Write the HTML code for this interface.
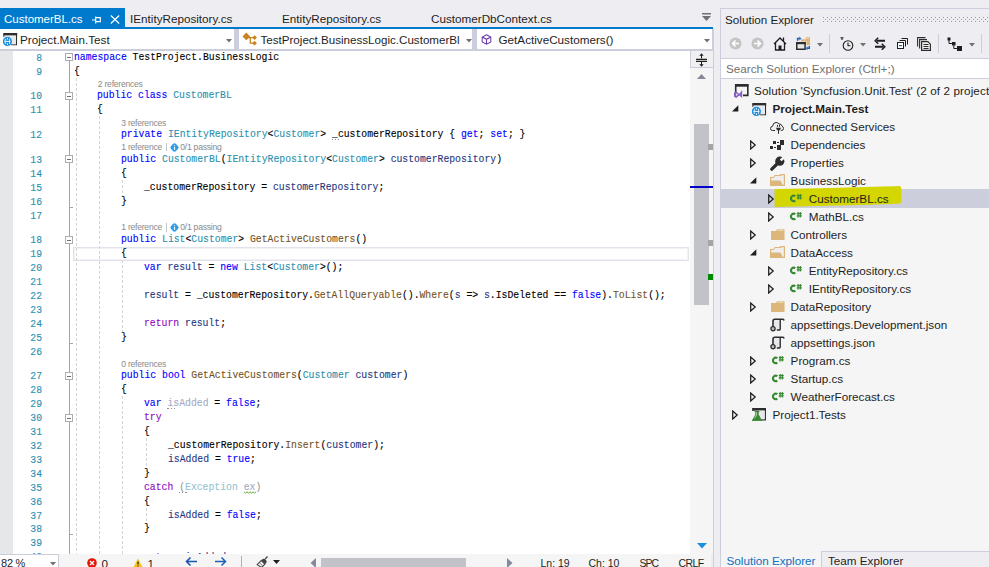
<!DOCTYPE html>
<html><head><meta charset="utf-8">
<style>
*{margin:0;padding:0;box-sizing:border-box}
html,body{width:989px;height:567px;overflow:hidden;background:#EEEEF2;font-family:"Liberation Sans",sans-serif;}
.a{position:absolute}
.code{position:absolute;font-family:"Liberation Mono",monospace;font-size:11px;line-height:14px;height:14px;white-space:pre;transform:scaleX(0.8879);transform-origin:0 0;-webkit-text-stroke:0.12px}
.ln{position:absolute;font-family:"Liberation Mono",monospace;font-size:11px;line-height:14px;height:14px;color:#2B91AF;text-align:right;width:40px;left:1.7px;white-space:pre;transform:scaleX(0.8879);transform-origin:100% 0;-webkit-text-stroke:0.15px}
.cl{position:absolute;font-size:8.6px;letter-spacing:-0.25px;line-height:11px;color:#8A8A8A;white-space:pre}
.ui{position:absolute;font-size:11.7px;line-height:16px;white-space:pre;color:#1E1E1E}
.tree{position:absolute;font-size:11.7px;line-height:18px;height:18px;white-space:pre;color:#1E1E1E}
</style></head><body>

<div class="a" style="left:0;top:8px;width:125px;height:20px;background:#007ACC"></div>
<div class="ui" style="left:4px;top:10.7px;color:#fff;font-size:11.5px">CustomerBL.cs</div>
<svg class="a" style="left:92px;top:16px" width="9" height="8" viewBox="0 0 9 8"><path d="M0 4H3.5M3.7 0.5V7.5M3.7 1.6H8.3V5.6H3.7" stroke="#fff" stroke-width="1.1" fill="none"/></svg>
<svg class="a" style="left:110px;top:14.5px" width="10" height="9" viewBox="0 0 10 9"><path d="M0.8 0.5L9.2 8.5M9.2 0.5L0.8 8.5" stroke="#fff" stroke-width="1.2"/></svg>
<div class="ui" style="left:130px;top:10.7px">IEntityRepository.cs</div>
<div class="ui" style="left:282px;top:10.7px">EntityRepository.cs</div>
<div class="ui" style="left:431px;top:10.7px">CustomerDbContext.cs</div>
<svg class="a" style="left:701px;top:12px" width="11" height="10" viewBox="0 0 11 10"><rect x="1" y="1" width="9" height="1.5" fill="#717171"/><path d="M1 4H10L5.5 9Z" fill="#717171"/></svg>
<div class="a" style="left:0;top:27px;width:713px;height:2px;background:#007ACC"></div>
<div class="a" style="left:0;top:29px;width:713px;height:20px;background:#fff"></div>
<div class="a" style="left:234px;top:29px;width:4.6px;height:20px;background:#CCCEDB"></div>
<div class="a" style="left:472px;top:29px;width:5px;height:20px;background:#CCCEDB"></div>
<div class="a" style="left:712px;top:29px;width:1px;height:22px;background:#CCCEDB"></div>
<div class="a" style="left:0;top:49px;width:713px;height:2px;background:#CCCEDB"></div>
<svg class="a" style="left:2.5px;top:32.5px" width="15" height="13" viewBox="0 0 15 13"><path d="M1 4V1H13.5V11.8H8" stroke="#2D2D2D" stroke-width="1.1" fill="none"/><rect x="0.4" y="0" width="13.8" height="2.6" fill="#2D2D2D"/><rect x="1.5" y="2.6" width="11.4" height="8.6" fill="#E8E8EC"/><circle cx="4.4" cy="8.4" r="4.6" fill="#1E8DDD"/><path d="M1.6 8.4H7.2M4.4 4.8V6.6M4.4 10.2V12" stroke="#fff" stroke-width="0.9"/><path d="M2.5 5.8Q1.3 8.4 2.5 11M6.3 5.8Q7.5 8.4 6.3 11" stroke="#fff" stroke-width="0.8" fill="none"/></svg>
<div class="ui" style="left:20px;top:32px">Project.Main.Test</div>
<svg class="a" style="left:226px;top:39px" width="6" height="4" viewBox="0 0 6 4"><path d="M0 0H6L3 3.5Z" fill="#717171"/></svg>
<svg class="a" style="left:241.5px;top:31.5px" width="15" height="16" viewBox="0 0 15 16"><path d="M4.3 0.6L8.1 4.4L4.3 8.2L0.5 4.4Z" fill="#C8841E"/><path d="M6 5.6H12M8.3 5.6V11.2H12" stroke="#C8841E" stroke-width="1.3" fill="none"/><path d="M12.6 3.2L14.9 5.6L12.6 8L10.3 5.6Z M12.6 8.8L14.9 11.2L12.6 13.6L10.3 11.2Z" fill="#C8841E"/></svg>
<div class="ui" style="left:260.5px;top:32px;font-size:11.6px">TestProject.BusinessLogic.CustomerBl</div>
<svg class="a" style="left:465.5px;top:39px" width="6" height="4" viewBox="0 0 6 4"><path d="M0 0H6L3 3.5Z" fill="#717171"/></svg>
<svg class="a" style="left:480.5px;top:34px" width="11" height="11" viewBox="0 0 11 12"><path d="M5.5 0.8L10.2 3.3V8.7L5.5 11.2L0.8 8.7V3.3Z M0.8 3.3L5.5 5.8L10.2 3.3 M5.5 5.8V11.2" stroke="#6936AA" stroke-width="1.1" fill="none"/></svg>
<div class="ui" style="left:498.5px;top:32px">GetActiveCustomers()</div>
<svg class="a" style="left:704px;top:39px" width="6" height="4" viewBox="0 0 6 4"><path d="M0 0H6L3 3.5Z" fill="#717171"/></svg>
<div class="a" style="left:0;top:51px;width:711px;height:503px;background:#fff;overflow:hidden">
<div class="a" style="left:0;top:0;width:13px;height:503px;background:#E6E7E8"></div>
</div>
<div class="a" style="left:0;top:51px;width:690px;height:503px;overflow:hidden">
<div class="a" style="left:73px;top:196.08px;width:616px;height:14px;border:1px solid #E2E2EA;box-shadow:inset 0 0 0 1px #F2F2F6"></div>
<div class="a" style="left:76.00px;top:26.58px;width:1px;height:487.62px;background:repeating-linear-gradient(to bottom,#D4D4D4 0 3px,transparent 3px 5px)"></div>
<div class="a" style="left:99.00px;top:65.30px;width:1px;height:448.90px;background:repeating-linear-gradient(to bottom,#D4D4D4 0 3px,transparent 3px 5px)"></div>
<div class="a" style="left:122.00px;top:128.83px;width:1px;height:15.82px;background:repeating-linear-gradient(to bottom,#D4D4D4 0 3px,transparent 3px 5px)"></div>
<div class="a" style="left:122.00px;top:209.28px;width:1px;height:71.46px;background:repeating-linear-gradient(to bottom,#D4D4D4 0 3px,transparent 3px 5px)"></div>
<div class="a" style="left:122.00px;top:345.37px;width:1px;height:168.83px;background:repeating-linear-gradient(to bottom,#D4D4D4 0 3px,transparent 3px 5px)"></div>
<div class="a" style="left:146.00px;top:387.10px;width:1px;height:29.73px;background:repeating-linear-gradient(to bottom,#D4D4D4 0 3px,transparent 3px 5px)"></div>
<div class="a" style="left:146.00px;top:456.65px;width:1px;height:15.82px;background:repeating-linear-gradient(to bottom,#D4D4D4 0 3px,transparent 3px 5px)"></div>
<div class="a" style="left:69px;top:10.00px;width:1px;height:31.00px;background:#A5A5A5"></div>
<div class="a" style="left:69px;top:49.00px;width:1px;height:55.00px;background:#A5A5A5"></div>
<div class="a" style="left:69px;top:112.00px;width:1px;height:73.00px;background:#A5A5A5"></div>
<div class="a" style="left:69px;top:193.00px;width:1px;height:128.00px;background:#A5A5A5"></div>
<div class="a" style="left:69px;top:329.00px;width:1px;height:34.00px;background:#A5A5A5"></div>
<div class="a" style="left:69px;top:371.00px;width:1px;height:149.00px;background:#A5A5A5"></div>
<div class="a" style="left:65px;top:2.00px;width:8px;height:8px;border:1px solid #ADADAD;background:#fff"></div>
<div class="a" style="left:67px;top:6.00px;width:4px;height:1px;background:#717171"></div>
<div class="a" style="left:65px;top:41.00px;width:8px;height:8px;border:1px solid #ADADAD;background:#fff"></div>
<div class="a" style="left:67px;top:45.00px;width:4px;height:1px;background:#717171"></div>
<div class="a" style="left:65px;top:104.00px;width:8px;height:8px;border:1px solid #ADADAD;background:#fff"></div>
<div class="a" style="left:67px;top:108.00px;width:4px;height:1px;background:#717171"></div>
<div class="a" style="left:65px;top:185.00px;width:8px;height:8px;border:1px solid #ADADAD;background:#fff"></div>
<div class="a" style="left:67px;top:189.00px;width:4px;height:1px;background:#717171"></div>
<div class="a" style="left:65px;top:321.00px;width:8px;height:8px;border:1px solid #ADADAD;background:#fff"></div>
<div class="a" style="left:67px;top:325.00px;width:4px;height:1px;background:#717171"></div>
<div class="a" style="left:65px;top:363.00px;width:8px;height:8px;border:1px solid #ADADAD;background:#fff"></div>
<div class="a" style="left:67px;top:367.00px;width:4px;height:1px;background:#717171"></div>
<div class="a" style="left:69px;top:156.00px;width:4px;height:1px;background:#A5A5A5"></div>
<div class="a" style="left:69px;top:292.00px;width:4px;height:1px;background:#A5A5A5"></div>
<div class="a" style="left:69px;top:483.00px;width:4px;height:1px;background:#A5A5A5"></div>
<div class="ln" style="top:-0.33px">8</div>
<div class="code" style="left:73.90px;top:-1.33px"><span style="color:#0000FF">namespace</span><span style="color:#000000"> TestProject.BusinessLogic</span></div>
<div class="ln" style="top:13.58px">9</div>
<div class="code" style="left:73.90px;top:12.58px"><span style="color:#000000">{</span></div>
<div class="ln" style="top:38.39px">10</div>
<div class="code" style="left:97.34px;top:37.39px"><span style="color:#0000FF">public</span><span style="color:#000000"> </span><span style="color:#0000FF">class</span><span style="color:#000000"> </span><span style="color:#2B91AF">CustomerBL</span></div>
<div class="cl" style="left:97.84px;top:27.82px">2 references</div>
<div class="ln" style="top:52.30px">11</div>
<div class="code" style="left:97.34px;top:51.30px"><span style="color:#000000">{</span></div>
<div class="ln" style="top:77.11px">12</div>
<div class="code" style="left:120.78px;top:76.11px"><span style="color:#0000FF">private</span><span style="color:#000000"> </span><span style="color:#2B91AF">IEntityRepository</span><span style="color:#000000">&lt;</span><span style="color:#2B91AF">Customer</span><span style="color:#000000">&gt; _customerRepository { </span><span style="color:#0000FF">get</span><span style="color:#000000">; </span><span style="color:#0000FF">set</span><span style="color:#000000">; }</span></div>
<div class="cl" style="left:121.28px;top:66.54px">3 references</div>
<div class="ln" style="top:101.92px">13</div>
<div class="code" style="left:120.78px;top:100.92px"><span style="color:#0000FF">public</span><span style="color:#000000"> </span><span style="color:#2B91AF">CustomerBL</span><span style="color:#000000">(</span><span style="color:#2B91AF">IEntityRepository</span><span style="color:#000000">&lt;</span><span style="color:#2B91AF">Customer</span><span style="color:#000000">&gt; </span><span style="color:#1F377F">customerRepository</span><span style="color:#000000">)</span></div>
<div class="cl" style="left:121.28px;top:90.75px">1 reference</div>
<div class="a" style="left:165.78px;top:91.95px;width:1px;height:8.5px;background:#C4C4C4"></div>
<svg class="a" style="left:169.58px;top:91.95px" width="9" height="9" viewBox="0 0 9 9"><path d="M4.5 0.3Q5.2 0.3 6.5 1.6L7.4 2.5Q8.7 3.8 8.7 4.5Q8.7 5.2 7.4 6.5L6.5 7.4Q5.2 8.7 4.5 8.7Q3.8 8.7 2.5 7.4L1.6 6.5Q0.3 5.2 0.3 4.5Q0.3 3.8 1.6 2.5L2.5 1.6Q3.8 0.3 4.5 0.3Z" fill="#2D9BE5"/><path d="M4.5 2.2V2.9M4.5 3.8V6.8" stroke="#fff" stroke-width="1.2"/></svg>
<div class="cl" style="left:180.28px;top:90.75px">0/1 passing</div>
<div class="ln" style="top:115.83px">14</div>
<div class="code" style="left:120.78px;top:114.83px"><span style="color:#000000">{</span></div>
<div class="ln" style="top:129.74px">15</div>
<div class="code" style="left:144.22px;top:128.74px"><span style="color:#000000">_customerRepository = </span><span style="color:#1F377F">customerRepository</span><span style="color:#000000">;</span></div>
<div class="ln" style="top:143.65px">16</div>
<div class="code" style="left:120.78px;top:142.65px"><span style="color:#000000">}</span></div>
<div class="ln" style="top:157.56px">17</div>
<div class="ln" style="top:182.37px">18</div>
<div class="code" style="left:120.78px;top:181.37px"><span style="color:#0000FF">public</span><span style="color:#000000"> </span><span style="color:#2B91AF">List</span><span style="color:#000000">&lt;</span><span style="color:#2B91AF">Customer</span><span style="color:#000000">&gt; </span><span style="color:#74531F">GetActiveCustomers</span><span style="color:#000000">()</span></div>
<div class="cl" style="left:121.28px;top:171.20px">1 reference</div>
<div class="a" style="left:165.78px;top:172.40px;width:1px;height:8.5px;background:#C4C4C4"></div>
<svg class="a" style="left:169.58px;top:172.40px" width="9" height="9" viewBox="0 0 9 9"><path d="M4.5 0.3Q5.2 0.3 6.5 1.6L7.4 2.5Q8.7 3.8 8.7 4.5Q8.7 5.2 7.4 6.5L6.5 7.4Q5.2 8.7 4.5 8.7Q3.8 8.7 2.5 7.4L1.6 6.5Q0.3 5.2 0.3 4.5Q0.3 3.8 1.6 2.5L2.5 1.6Q3.8 0.3 4.5 0.3Z" fill="#2D9BE5"/><path d="M4.5 2.2V2.9M4.5 3.8V6.8" stroke="#fff" stroke-width="1.2"/></svg>
<div class="cl" style="left:180.28px;top:171.20px">0/1 passing</div>
<div class="ln" style="top:196.28px">19</div>
<div class="code" style="left:120.78px;top:195.28px"><span style="color:#000000">{</span></div>
<div class="ln" style="top:210.19px">20</div>
<div class="code" style="left:144.22px;top:209.19px"><span style="color:#0000FF">var</span><span style="color:#000000"> </span><span style="color:#1F377F">result</span><span style="color:#000000"> = </span><span style="color:#0000FF">new</span><span style="color:#000000"> </span><span style="color:#2B91AF">List</span><span style="color:#000000">&lt;</span><span style="color:#2B91AF">Customer</span><span style="color:#000000">&gt;();</span></div>
<div class="ln" style="top:224.10px">21</div>
<div class="ln" style="top:238.01px">22</div>
<div class="code" style="left:144.22px;top:237.01px"><span style="color:#1F377F">result</span><span style="color:#000000"> = _customerRepository.</span><span style="color:#74531F">GetAllQueryable</span><span style="color:#000000">().</span><span style="color:#74531F">Where</span><span style="color:#000000">(</span><span style="color:#1F377F">s</span><span style="color:#000000"> =&gt; </span><span style="color:#1F377F">s</span><span style="color:#000000">.IsDeleted == </span><span style="color:#0000FF">false</span><span style="color:#000000">).</span><span style="color:#74531F">ToList</span><span style="color:#000000">();</span></div>
<div class="ln" style="top:251.92px">23</div>
<div class="ln" style="top:265.83px">24</div>
<div class="code" style="left:144.22px;top:264.83px"><span style="color:#8F08C4">return</span><span style="color:#000000"> </span><span style="color:#1F377F">result</span><span style="color:#000000">;</span></div>
<div class="ln" style="top:279.74px">25</div>
<div class="code" style="left:120.78px;top:278.74px"><span style="color:#000000">}</span></div>
<div class="ln" style="top:293.65px">26</div>
<div class="ln" style="top:318.46px">27</div>
<div class="code" style="left:120.78px;top:317.46px"><span style="color:#0000FF">public</span><span style="color:#000000"> </span><span style="color:#0000FF">bool</span><span style="color:#000000"> </span><span style="color:#74531F">GetActiveCustomers</span><span style="color:#000000">(</span><span style="color:#2B91AF">Customer</span><span style="color:#000000"> </span><span style="color:#1F377F">customer</span><span style="color:#000000">)</span></div>
<div class="cl" style="left:121.28px;top:307.89px">0 references</div>
<div class="ln" style="top:332.37px">28</div>
<div class="code" style="left:120.78px;top:331.37px"><span style="color:#000000">{</span></div>
<div class="ln" style="top:346.28px">29</div>
<div class="code" style="left:144.22px;top:345.28px"><span style="color:#0000FF">var</span><span style="color:#000000"> </span><span style="color:#A3ABC6">isAdded</span><span style="color:#000000"> = </span><span style="color:#0000FF">false</span><span style="color:#000000">;</span></div>
<div class="ln" style="top:360.19px">30</div>
<div class="code" style="left:144.22px;top:359.19px"><span style="color:#8F08C4">try</span></div>
<div class="ln" style="top:374.10px">31</div>
<div class="code" style="left:144.22px;top:373.10px"><span style="color:#000000">{</span></div>
<div class="ln" style="top:388.01px">32</div>
<div class="code" style="left:167.66px;top:387.01px"><span style="color:#000000">_customerRepository.</span><span style="color:#74531F">Insert</span><span style="color:#000000">(</span><span style="color:#1F377F">customer</span><span style="color:#000000">);</span></div>
<div class="ln" style="top:401.92px">33</div>
<div class="code" style="left:167.66px;top:400.92px"><span style="color:#1F377F">isAdded</span><span style="color:#000000"> = </span><span style="color:#0000FF">true</span><span style="color:#000000">;</span></div>
<div class="ln" style="top:415.83px">34</div>
<div class="code" style="left:144.22px;top:414.83px"><span style="color:#000000">}</span></div>
<div class="ln" style="top:429.74px">35</div>
<div class="code" style="left:144.22px;top:428.74px"><span style="color:#8F08C4">catch</span><span style="color:#9A9A9A"> (</span><span style="color:#95C3D3">Exception</span><span style="color:#9A9A9A"> </span><span style="color:#A3ABC6">ex</span><span style="color:#9A9A9A">)</span></div>
<div class="ln" style="top:443.65px">36</div>
<div class="code" style="left:144.22px;top:442.65px"><span style="color:#000000">{</span></div>
<div class="ln" style="top:457.56px">37</div>
<div class="code" style="left:167.66px;top:456.56px"><span style="color:#1F377F">isAdded</span><span style="color:#000000"> = </span><span style="color:#0000FF">false</span><span style="color:#000000">;</span></div>
<div class="ln" style="top:471.47px">38</div>
<div class="code" style="left:144.22px;top:470.47px"><span style="color:#000000">}</span></div>
<div class="ln" style="top:485.38px">39</div>
<div class="ln" style="top:499.29px">40</div>
<div class="code" style="left:144.22px;top:499.29px"><span style="color:#8F08C4">return</span><span style="color:#000000"> </span><span style="color:#1F377F">isAdded</span><span style="color:#000000">;</span></div>
<div class="ln" style="top:513.20px">41</div>
<div class="a" style="left:331.54px;top:88.04px;width:1.2px;height:1.2px;background:#8E8E8E"></div>
<div class="a" style="left:334.64px;top:88.04px;width:1.2px;height:1.2px;background:#8E8E8E"></div>
<div class="a" style="left:337.74px;top:88.04px;width:1.2px;height:1.2px;background:#8E8E8E"></div>
<div class="a" style="left:167.46px;top:357.21px;width:1.2px;height:1.2px;background:#8E8E8E"></div>
<div class="a" style="left:170.56px;top:357.21px;width:1.2px;height:1.2px;background:#8E8E8E"></div>
<div class="a" style="left:173.66px;top:357.21px;width:1.2px;height:1.2px;background:#8E8E8E"></div>
<div class="a" style="left:179.18px;top:440.67px;width:1.2px;height:1.2px;background:#8E8E8E"></div>
<div class="a" style="left:182.28px;top:440.67px;width:1.2px;height:1.2px;background:#8E8E8E"></div>
<div class="a" style="left:185.38px;top:440.67px;width:1.2px;height:1.2px;background:#8E8E8E"></div>
<svg class="a" style="left:243.84px;top:440.27px" width="12" height="3" viewBox="0 0 12 3"><path d="M0 0.8L1.5 2.2L3 0.8L4.5 2.2L6 0.8L7.5 2.2L9 0.8L10.5 2.2L12 0.8" stroke="#5FA832" stroke-width="1" fill="none"/></svg>
</div>
<div class="a" style="left:690px;top:51px;width:23px;height:503px;background:#F5F5F5"></div>
<div class="a" style="left:713px;top:29px;width:1px;height:538px;background:#CCCEDB"></div>
<div class="a" style="left:690px;top:51px;width:23px;height:17px;background:#F0F0F2;border-left:1px solid #CCCEDB;border-bottom:1px solid #CCCEDB"></div>
<svg class="a" style="left:696px;top:53px" width="11" height="14" viewBox="0 0 11 14"><path d="M0 6.3H11M0 8.3H11" stroke="#1E1E1E" stroke-width="1.2"/><path d="M5.5 2V5.5M5.5 9V12" stroke="#1E1E1E" stroke-width="1"/><path d="M3.3 2.8L5.5 0.3L7.7 2.8Z M3.3 11.2L5.5 13.7L7.7 11.2Z" fill="#1E1E1E"/></svg>
<svg class="a" style="left:697px;top:74px" width="9" height="5" viewBox="0 0 9 5"><path d="M0 5H9L4.5 0Z" fill="#868999"/></svg>
<div class="a" style="left:694px;top:124px;width:15px;height:181px;background:#C2C3C9"></div>
<div class="a" style="left:708px;top:144px;width:5px;height:6px;background:#A5A5A5"></div>
<div class="a" style="left:708px;top:240px;width:5px;height:6px;background:#A5A5A5"></div>
<div class="a" style="left:708px;top:274px;width:5px;height:6px;background:#008A00"></div>
<div class="a" style="left:690px;top:186px;width:23px;height:2px;background:#0000CD"></div>
<svg class="a" style="left:697px;top:543px" width="10" height="6" viewBox="0 0 10 6"><path d="M0 0H10L5 5.5Z" fill="#1B8EE0"/></svg>
<div class="a" style="left:0;top:554px;width:711px;height:13px;background:#F5F5F5"></div>
<div class="a" style="left:0;top:554px;width:59px;height:13px;background:#fff;border:1px solid #CCCEDB;border-left:none;border-bottom:none"></div>
<div class="ui" style="left:1px;top:555px;font-size:11px;word-spacing:-0.8px">82 %</div>
<svg class="a" style="left:50px;top:562px" width="6" height="4" viewBox="0 0 6 4"><path d="M0 0H6L3 3.5Z" fill="#717171"/></svg>
<svg class="a" style="left:87px;top:558px" width="10" height="10" viewBox="0 0 10 10"><circle cx="5" cy="5" r="4.8" fill="#E51400"/><path d="M3 3L7 7M7 3L3 7" stroke="#fff" stroke-width="1.4"/></svg>
<div class="ui" style="left:101.5px;top:555.5px">0</div>
<svg class="a" style="left:133px;top:558px" width="10" height="10" viewBox="0 0 10 10"><path d="M5 0.5L9.7 9.5H0.3Z" fill="#F8C41A"/><path d="M5 3.5V6.5M5 7.5V8.5" stroke="#1E1E1E" stroke-width="1.2"/></svg>
<div class="ui" style="left:147.5px;top:555.5px">1</div>
<svg class="a" style="left:185px;top:556px" width="13" height="11" viewBox="0 0 13 11"><path d="M12 5.5H1.5M5.5 1.5L1.5 5.5L5.5 9.5" stroke="#1C55AD" stroke-width="1.6" fill="none"/></svg>
<svg class="a" style="left:214px;top:556px" width="13" height="11" viewBox="0 0 13 11"><path d="M1 5.5H11.5M7.5 1.5L11.5 5.5L7.5 9.5" stroke="#1F5FB5" stroke-width="1.5" fill="none"/></svg>
<div class="a" style="left:241px;top:556px;width:1px;height:11px;background:#B0B0B0"></div>
<svg class="a" style="left:256px;top:556px" width="13" height="11" viewBox="0 0 13 11"><path d="M11.5 0.5L9.2 3" stroke="#424242" stroke-width="1.2"/><path d="M6.3 3.2Q8 2 9.8 3.8Q11.5 5.5 10.2 7.2L8.8 8.2L5.2 4.6Z" fill="#424242"/><path d="M5.2 4.6L8.8 8.2L5.6 11.4L1.2 8.6Z" fill="#fff" stroke="#424242" stroke-width="1.1"/><path d="M3.5 6.8L6.5 9.6" stroke="#424242" stroke-width="0.8"/></svg>
<svg class="a" style="left:273px;top:560px" width="7" height="5" viewBox="0 0 7 5"><path d="M0 0H7L3.5 4Z" fill="#1E1E1E"/></svg>
<svg class="a" style="left:310px;top:558px" width="6" height="10" viewBox="0 0 6 10"><path d="M6 0V10L0.5 5Z" fill="#868999"/></svg>
<div class="a" style="left:321px;top:558px;width:145px;height:9px;background:#C2C3C9"></div>
<svg class="a" style="left:506.5px;top:558px" width="6" height="10" viewBox="0 0 6 10"><path d="M0 0V10L5.5 5Z" fill="#868999"/></svg>
<div class="ui" style="left:540.5px;top:555px;font-size:10.5px">Ln: 19</div>
<div class="ui" style="left:588.5px;top:555px;font-size:10.5px">Ch: 10</div>
<div class="ui" style="left:639.5px;top:555px;font-size:10.5px;letter-spacing:-1px">SPC</div>
<div class="ui" style="left:678.5px;top:555px;font-size:10.5px;letter-spacing:-0.6px">CRLF</div>
<div class="a" style="left:720px;top:8px;width:269px;height:559px;background:#EEEEF2;border-left:1px solid #CCCEDB;border-top:1px solid #CCCEDB"></div>
<div class="a" style="left:721px;top:79px;width:268px;height:488px;background:#F5F5F5"></div>
<div class="ui" style="left:725px;top:11.5px;color:#1E1E1E">Solution Explorer</div>
<svg class="a" style="left:823px;top:17px" width="166" height="5"><defs><pattern id="grip" width="4" height="4" patternUnits="userSpaceOnUse"><rect x="0" y="0" width="1" height="1" fill="#9A9AA0"/><rect x="2" y="2" width="1" height="1" fill="#9A9AA0"/></pattern></defs><rect width="166" height="5" fill="url(#grip)"/></svg>
<svg class="a" style="left:729px;top:37px" width="13" height="13" viewBox="0 0 13 13"><circle cx="6.5" cy="6.5" r="6" fill="#C4C4C4"/><path d="M10 6.5H3.5M6.5 3.5L3.5 6.5L6.5 9.5" stroke="#fff" stroke-width="1.6" fill="none"/></svg>
<svg class="a" style="left:751px;top:37px" width="13" height="13" viewBox="0 0 13 13"><circle cx="6.5" cy="6.5" r="6" fill="#C4C4C4"/><path d="M3 6.5H9.5M6.5 3.5L9.5 6.5L6.5 9.5" stroke="#fff" stroke-width="1.6" fill="none"/></svg>
<svg class="a" style="left:773px;top:36px" width="14" height="15" viewBox="0 0 14 15"><path d="M1 8L7 2L13 8M2.5 6.5V14H11.5V6.5M10.5 1.5V5" stroke="#1E1E1E" stroke-width="1.3" fill="none"/><rect x="5.5" y="9.5" width="3" height="4.5" fill="#1E1E1E"/></svg>
<svg class="a" style="left:796px;top:36px" width="15" height="15" viewBox="0 0 15 15"><path d="M5 3.2H9.8V1H14V9.2H10.4V5.6H5Z" fill="#DCB67A"/><path d="M10.6 2.2H13" stroke="#F3E6CC" stroke-width="0.9"/><rect x="0.75" y="6.75" width="8.3" height="6.5" fill="#E8E8E8" stroke="#2D2D2D" stroke-width="1.5"/><rect x="0" y="6" width="9.8" height="2.2" fill="#2D2D2D"/><path d="M1.6 4.8V2.6H3.5" stroke="#1F5FB5" stroke-width="1.5" fill="none"/><path d="M3.3 0.6L5.3 2.6L3.3 4.6Z" fill="#1F5FB5"/><path d="M13.3 10V12.3H11.5" stroke="#1F5FB5" stroke-width="1.5" fill="none"/><path d="M11.7 10.3L9.7 12.3L11.7 14.3Z" fill="#1F5FB5"/></svg>
<svg class="a" style="left:817px;top:43px" width="6" height="4" viewBox="0 0 6 4"><path d="M0 0H6L3 3.5Z" fill="#717171"/></svg>
<div class="a" style="left:829px;top:34px;width:1px;height:19px;background:#CCCEDB"></div>
<svg class="a" style="left:840px;top:37px" width="14" height="14" viewBox="0 0 14 14"><path d="M0.5 0.8H3.5M2 0.8V3" stroke="#1E1E1E" stroke-width="1.1"/><circle cx="8" cy="8.5" r="4.8" stroke="#1E1E1E" stroke-width="1.1" fill="none"/><path d="M8 5.5V8.8H10.5" stroke="#1E1E1E" stroke-width="1.1" fill="none"/></svg>
<svg class="a" style="left:860px;top:43px" width="6" height="4" viewBox="0 0 6 4"><path d="M0 0H6L3 3.5Z" fill="#717171"/></svg>
<svg class="a" style="left:874px;top:37px" width="12" height="13" viewBox="0 0 12 13"><path d="M11 3.8H2.5M9.5 9.8H1" stroke="#1E1E1E" stroke-width="1.9" fill="none"/><path d="M4.2 0.8L1.2 3.8L4.2 6.8M7.8 6.8L10.8 9.8L7.8 12.8" stroke="#1E1E1E" stroke-width="1.5" fill="none"/></svg>
<svg class="a" style="left:897px;top:38px" width="11" height="11" viewBox="0 0 11 11"><path d="M4.5 0.5H10.5V6.5M2.5 2.5H8.5V8.5" stroke="#1E1E1E" stroke-width="1" fill="none"/><rect x="0.5" y="4.5" width="6" height="6" fill="#fff" stroke="#1E1E1E" stroke-width="1"/><rect x="2" y="7" width="3" height="1.2" fill="#1F5FB5"/></svg>
<svg class="a" style="left:917px;top:37px" width="15" height="14" viewBox="0 0 15 14"><path d="M0.6 9.5V0.6H8.5M2.6 11.5V2.6H10" stroke="#2D2D2D" stroke-width="1.1" fill="none"/><path d="M4.6 4.6H10.8L13.4 7.2V13.4H4.6Z" fill="#F0F0F0" stroke="#2D2D2D" stroke-width="1.2"/><path d="M6.5 7.5H11.5M6.5 9.5H11.5M6.5 11.5H11.5" stroke="#2D2D2D" stroke-width="1"/></svg>
<div class="a" style="left:938px;top:34px;width:1px;height:19px;background:#CCCEDB"></div>
<svg class="a" style="left:947px;top:37px" width="16" height="14" viewBox="0 0 16 14"><rect x="0.5" y="0.5" width="3" height="3" fill="#1E1E1E"/><rect x="5" y="5" width="3.5" height="3.5" fill="#1E1E1E"/><rect x="10" y="9" width="5" height="5" fill="#1E1E1E"/><path d="M2 3V6.5H5M6.8 8.5V11.5H10" stroke="#1E1E1E" stroke-width="1" fill="none"/></svg>
<svg class="a" style="left:969px;top:43px" width="6" height="4" viewBox="0 0 6 4"><path d="M0 0H6L3 3.5Z" fill="#717171"/></svg>
<div class="a" style="left:981px;top:34px;width:1px;height:19px;background:#CCCEDB"></div>
<div class="a" style="left:721px;top:58px;width:268px;height:21px;background:#fff;border:1px solid #CCCEDB;border-right:none;border-left:none"></div>
<div class="ui" style="left:726px;top:60.5px;color:#717171">Search Solution Explorer (Ctrl+;)</div>
<div class="a" style="left:721px;top:189px;width:268px;height:19px;background:#CCCEDB"></div>
<svg class="a" style="left:772px;top:183px" width="132" height="26" viewBox="0 0 132 26"><path d="M2.6 6Q60 5 110 3.5Q124 3 128 3Q129.5 4 129.5 8L129.3 19Q129 20.6 126 20.7Q70 22.5 2.6 24Z" fill="#D3D600"/></svg>
<svg class="a" style="left:733.50px;top:84.00px" width="15" height="15" viewBox="0 0 15 15"><path d="M1.7 8V1H13.8V11.4H9" stroke="#2D2D2D" stroke-width="1.6" fill="none"/><rect x="1" y="0" width="13.5" height="2.7" fill="#2D2D2D"/><path d="M0 8.5L2.2 7.2L5.2 10L8.2 6V14L5.2 11.5L2.2 14L0 12.7Z" fill="#865FC5"/><path d="M2.2 9.3V12L3.8 10.6Z" fill="#fff"/></svg>
<div class="tree" style="left:754.0px;top:81.7px;letter-spacing:0.1px;">Solution &#x27;Syncfusion.Unit.Test&#x27; (2 of 2 projects)</div>
<svg class="a" style="left:732.00px;top:105.00px" width="7" height="7" viewBox="0 0 7 7"><path d="M6.3 0.3V6.5H0Z" fill="#1E1E1E"/></svg>
<svg class="a" style="left:751.50px;top:103.00px" width="15" height="13" viewBox="0 0 15 13"><path d="M1 4V1H13.5V11.8H8" stroke="#2D2D2D" stroke-width="1.1" fill="none"/><rect x="0.4" y="0" width="13.8" height="2.6" fill="#2D2D2D"/><rect x="1.5" y="2.6" width="11.4" height="8.6" fill="#E8E8EC"/><circle cx="4.4" cy="8.4" r="4.6" fill="#1E8DDD"/><path d="M1.6 8.4H7.2M4.4 4.8V6.6M4.4 10.2V12" stroke="#fff" stroke-width="0.9"/><path d="M2.5 5.8Q1.3 8.4 2.5 11M6.3 5.8Q7.5 8.4 6.3 11" stroke="#fff" stroke-width="0.8" fill="none"/></svg>
<div class="tree" style="left:772.5px;top:99.7px;font-weight:bold;">Project.Main.Test</div>
<svg class="a" style="left:770.00px;top:121.00px" width="15" height="14" viewBox="0 0 15 14"><path d="M5 9.5H2.5Q0.5 9.5 0.5 7.5Q0.5 5.5 2.5 5.3Q3 1.5 6 1.5Q8.2 1.5 9 3Q11.6 2.8 12 5Q13.5 5.8 13.5 7.5Q13.5 9.5 11.5 9.5H10.8" stroke="#2D2D2D" stroke-width="1" fill="#EFEFF2"/><path d="M7.5 4V5.8M9.5 4V5.8" stroke="#2D2D2D" stroke-width="1"/><path d="M6 6.8H11L10 9.2H7Z" fill="#2D2D2D"/><path d="M8.5 9V12.8" stroke="#2D2D2D" stroke-width="1"/></svg>
<div class="tree" style="left:790.6px;top:117.7px;">Connected Services</div>
<svg class="a" style="left:750.00px;top:139.50px" width="7" height="10" viewBox="0 0 7 10"><path d="M0.7 1V9L5.2 5Z" fill="none" stroke="#1E1E1E" stroke-width="1.25" stroke-linejoin="miter"/></svg>
<svg class="a" style="left:770.00px;top:140.00px" width="15" height="10" viewBox="0 0 15 10"><rect x="3" y="1" width="3" height="3" fill="#2D2D2D"/><rect x="7" y="2" width="2" height="1" fill="#2D2D2D"/><rect x="10" y="0" width="4" height="5" fill="#2D2D2D"/><rect x="0" y="6" width="3" height="3" fill="#2D2D2D"/><rect x="4" y="7" width="2" height="1" fill="#2D2D2D"/><rect x="7" y="5" width="4" height="5" fill="#2D2D2D"/></svg>
<div class="tree" style="left:790.6px;top:135.7px;">Dependencies</div>
<svg class="a" style="left:750.00px;top:157.50px" width="7" height="10" viewBox="0 0 7 10"><path d="M0.7 1V9L5.2 5Z" fill="none" stroke="#1E1E1E" stroke-width="1.25" stroke-linejoin="miter"/></svg>
<svg class="a" style="left:770.00px;top:156.00px" width="15" height="15" viewBox="0 0 15 15"><path d="M1.8 13.2L7 8" stroke="#2D2D2D" stroke-width="3.2" stroke-linecap="round"/><circle cx="9.8" cy="5.2" r="4.6" fill="#2D2D2D"/><path d="M9.86 3.44L13.04 0.26L15 2.2L11.56 5.14Z" fill="#F5F5F5"/></svg>
<div class="tree" style="left:790.6px;top:153.7px;">Properties</div>
<svg class="a" style="left:750.00px;top:177.00px" width="7" height="7" viewBox="0 0 7 7"><path d="M6.3 0.3V6.5H0Z" fill="#1E1E1E"/></svg>
<svg class="a" style="left:769.60px;top:174.00px" width="15" height="12" viewBox="0 0 15 12"><path d="M0.6 3.5H3.5L5 1.5H10.5V0.6H14.4V11.4H0.6Z" fill="#EFEEF0" stroke="#DCB67A" stroke-width="1.2"/><path d="M0 6.5H10.5L13 11.5H1Z" fill="#DCB67A"/></svg>
<div class="tree" style="left:790.6px;top:171.7px;">BusinessLogic</div>
<svg class="a" style="left:768.00px;top:193.50px" width="7" height="10" viewBox="0 0 7 10"><path d="M0.7 1V9L5.2 5Z" fill="none" stroke="#1E1E1E" stroke-width="1.25" stroke-linejoin="miter"/></svg>
<svg class="a" style="left:789.70px;top:194.30px" width="13" height="9" viewBox="0 0 13 9"><path d="M5.3 2.2A2.7 2.7 0 1 0 5.3 6.6" stroke="#388A34" stroke-width="2.1" fill="none"/><path d="M8.1 0V5.4M10.3 0V5.4M6.8 1.6H11.8M6.8 3.8H11.8" stroke="#388A34" stroke-width="1.2"/></svg>
<div class="tree" style="left:808.7px;top:189.7px;">CustomerBL.cs</div>
<svg class="a" style="left:768.00px;top:211.50px" width="7" height="10" viewBox="0 0 7 10"><path d="M0.7 1V9L5.2 5Z" fill="none" stroke="#1E1E1E" stroke-width="1.25" stroke-linejoin="miter"/></svg>
<svg class="a" style="left:789.70px;top:212.30px" width="13" height="9" viewBox="0 0 13 9"><path d="M5.3 2.2A2.7 2.7 0 1 0 5.3 6.6" stroke="#388A34" stroke-width="2.1" fill="none"/><path d="M8.1 0V5.4M10.3 0V5.4M6.8 1.6H11.8M6.8 3.8H11.8" stroke="#388A34" stroke-width="1.2"/></svg>
<div class="tree" style="left:808.7px;top:207.7px;">MathBL.cs</div>
<svg class="a" style="left:750.00px;top:229.50px" width="7" height="10" viewBox="0 0 7 10"><path d="M0.7 1V9L5.2 5Z" fill="none" stroke="#1E1E1E" stroke-width="1.25" stroke-linejoin="miter"/></svg>
<svg class="a" style="left:770.60px;top:229.00px" width="14" height="11" viewBox="0 0 14 11"><path d="M0 2H5L6 0.3H13.5V11H0Z" fill="#DCB67A"/><path d="M6.5 1.3H12.5" stroke="#F2E3C6" stroke-width="0.9"/></svg>
<div class="tree" style="left:790.6px;top:225.7px;">Controllers</div>
<svg class="a" style="left:750.00px;top:249.00px" width="7" height="7" viewBox="0 0 7 7"><path d="M6.3 0.3V6.5H0Z" fill="#1E1E1E"/></svg>
<svg class="a" style="left:769.60px;top:246.00px" width="15" height="12" viewBox="0 0 15 12"><path d="M0.6 3.5H3.5L5 1.5H10.5V0.6H14.4V11.4H0.6Z" fill="#EFEEF0" stroke="#DCB67A" stroke-width="1.2"/><path d="M0 6.5H10.5L13 11.5H1Z" fill="#DCB67A"/></svg>
<div class="tree" style="left:790.6px;top:243.7px;">DataAccess</div>
<svg class="a" style="left:768.00px;top:265.50px" width="7" height="10" viewBox="0 0 7 10"><path d="M0.7 1V9L5.2 5Z" fill="none" stroke="#1E1E1E" stroke-width="1.25" stroke-linejoin="miter"/></svg>
<svg class="a" style="left:789.70px;top:266.30px" width="13" height="9" viewBox="0 0 13 9"><path d="M5.3 2.2A2.7 2.7 0 1 0 5.3 6.6" stroke="#388A34" stroke-width="2.1" fill="none"/><path d="M8.1 0V5.4M10.3 0V5.4M6.8 1.6H11.8M6.8 3.8H11.8" stroke="#388A34" stroke-width="1.2"/></svg>
<div class="tree" style="left:808.7px;top:261.7px;">EntityRepository.cs</div>
<svg class="a" style="left:768.00px;top:283.50px" width="7" height="10" viewBox="0 0 7 10"><path d="M0.7 1V9L5.2 5Z" fill="none" stroke="#1E1E1E" stroke-width="1.25" stroke-linejoin="miter"/></svg>
<svg class="a" style="left:789.70px;top:284.30px" width="13" height="9" viewBox="0 0 13 9"><path d="M5.3 2.2A2.7 2.7 0 1 0 5.3 6.6" stroke="#388A34" stroke-width="2.1" fill="none"/><path d="M8.1 0V5.4M10.3 0V5.4M6.8 1.6H11.8M6.8 3.8H11.8" stroke="#388A34" stroke-width="1.2"/></svg>
<div class="tree" style="left:808.7px;top:279.7px;">IEntityRepository.cs</div>
<svg class="a" style="left:750.00px;top:301.50px" width="7" height="10" viewBox="0 0 7 10"><path d="M0.7 1V9L5.2 5Z" fill="none" stroke="#1E1E1E" stroke-width="1.25" stroke-linejoin="miter"/></svg>
<svg class="a" style="left:770.60px;top:301.00px" width="14" height="11" viewBox="0 0 14 11"><path d="M0 2H5L6 0.3H13.5V11H0Z" fill="#DCB67A"/><path d="M6.5 1.3H12.5" stroke="#F2E3C6" stroke-width="0.9"/></svg>
<div class="tree" style="left:790.6px;top:297.7px;">DataRepository</div>
<svg class="a" style="left:770.00px;top:318.00px" width="15" height="14" viewBox="0 0 15 14"><path d="M3.8 2.2H9.6V11.4H5.5V8H3.8Z" fill="#E8E8EC"/><path d="M3 8.6V3Q3 1.2 4.8 1.2H13Q13.8 1.2 13.8 2" stroke="#2D2D2D" stroke-width="1.6" fill="none" stroke-linecap="round"/><path d="M10.2 1.8V11.3Q10.2 12 9.5 12H6.8" stroke="#2D2D2D" stroke-width="1.4" fill="none"/><circle cx="3" cy="10.8" r="2.1" fill="#BDBDBD" stroke="#2D2D2D" stroke-width="1.3"/></svg>
<div class="tree" style="left:790.6px;top:315.7px;">appsettings.Development.json</div>
<svg class="a" style="left:770.00px;top:336.00px" width="15" height="14" viewBox="0 0 15 14"><path d="M3.8 2.2H9.6V11.4H5.5V8H3.8Z" fill="#E8E8EC"/><path d="M3 8.6V3Q3 1.2 4.8 1.2H13Q13.8 1.2 13.8 2" stroke="#2D2D2D" stroke-width="1.6" fill="none" stroke-linecap="round"/><path d="M10.2 1.8V11.3Q10.2 12 9.5 12H6.8" stroke="#2D2D2D" stroke-width="1.4" fill="none"/><circle cx="3" cy="10.8" r="2.1" fill="#BDBDBD" stroke="#2D2D2D" stroke-width="1.3"/></svg>
<div class="tree" style="left:790.6px;top:333.7px;">appsettings.json</div>
<svg class="a" style="left:750.00px;top:355.50px" width="7" height="10" viewBox="0 0 7 10"><path d="M0.7 1V9L5.2 5Z" fill="none" stroke="#1E1E1E" stroke-width="1.25" stroke-linejoin="miter"/></svg>
<svg class="a" style="left:771.60px;top:356.30px" width="13" height="9" viewBox="0 0 13 9"><path d="M5.3 2.2A2.7 2.7 0 1 0 5.3 6.6" stroke="#388A34" stroke-width="2.1" fill="none"/><path d="M8.1 0V5.4M10.3 0V5.4M6.8 1.6H11.8M6.8 3.8H11.8" stroke="#388A34" stroke-width="1.2"/></svg>
<div class="tree" style="left:790.6px;top:351.7px;">Program.cs</div>
<svg class="a" style="left:750.00px;top:373.50px" width="7" height="10" viewBox="0 0 7 10"><path d="M0.7 1V9L5.2 5Z" fill="none" stroke="#1E1E1E" stroke-width="1.25" stroke-linejoin="miter"/></svg>
<svg class="a" style="left:771.60px;top:374.30px" width="13" height="9" viewBox="0 0 13 9"><path d="M5.3 2.2A2.7 2.7 0 1 0 5.3 6.6" stroke="#388A34" stroke-width="2.1" fill="none"/><path d="M8.1 0V5.4M10.3 0V5.4M6.8 1.6H11.8M6.8 3.8H11.8" stroke="#388A34" stroke-width="1.2"/></svg>
<div class="tree" style="left:790.6px;top:369.7px;">Startup.cs</div>
<svg class="a" style="left:750.00px;top:391.50px" width="7" height="10" viewBox="0 0 7 10"><path d="M0.7 1V9L5.2 5Z" fill="none" stroke="#1E1E1E" stroke-width="1.25" stroke-linejoin="miter"/></svg>
<svg class="a" style="left:771.60px;top:392.30px" width="13" height="9" viewBox="0 0 13 9"><path d="M5.3 2.2A2.7 2.7 0 1 0 5.3 6.6" stroke="#388A34" stroke-width="2.1" fill="none"/><path d="M8.1 0V5.4M10.3 0V5.4M6.8 1.6H11.8M6.8 3.8H11.8" stroke="#388A34" stroke-width="1.2"/></svg>
<div class="tree" style="left:790.6px;top:387.7px;">WeatherForecast.cs</div>
<svg class="a" style="left:732.00px;top:409.50px" width="7" height="10" viewBox="0 0 7 10"><path d="M0.7 1V9L5.2 5Z" fill="none" stroke="#1E1E1E" stroke-width="1.25" stroke-linejoin="miter"/></svg>
<svg class="a" style="left:751.80px;top:408.00px" width="15" height="13" viewBox="0 0 15 13"><path d="M1 3V1H13.3V11.8H9" stroke="#2D2D2D" stroke-width="1.3" fill="none"/><rect x="0.3" y="0" width="13.7" height="2.6" fill="#2D2D2D"/><rect x="6.5" y="2.6" width="6.2" height="8.6" fill="#E8E8EC"/><path d="M2.6 3.5H7.4M3.8 3.5V6.5L0.3 12.8H9.6L6.2 6.5V3.5" fill="#388A34" stroke="#388A34" stroke-width="1"/><path d="M4.6 4V7L2.6 10.2" stroke="#fff" stroke-width="0.6" fill="none"/></svg>
<div class="tree" style="left:772.5px;top:405.7px;">Project1.Tests</div>
<div class="a" style="left:721px;top:551px;width:268px;height:16px;background:#F5F5F5"></div>
<div class="ui" style="left:726.5px;top:553px;color:#0E70C0">Solution Explorer</div>
<div class="a" style="left:821px;top:551px;width:168px;height:16px;background:#EEEEF2;border-left:1px solid #CCCEDB;border-top:1px solid #CCCEDB"></div>
<div class="ui" style="left:828px;top:553px">Team Explorer</div>
</body></html>
